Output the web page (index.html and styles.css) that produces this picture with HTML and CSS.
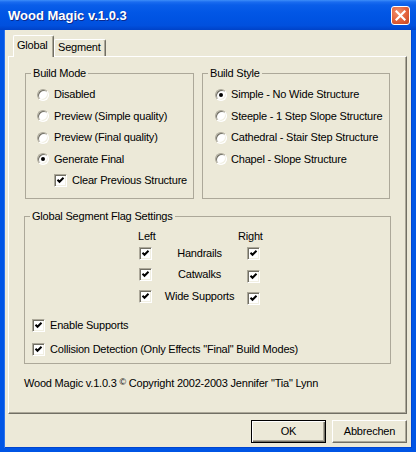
FILE: index.html
```html
<!DOCTYPE html>
<html>
<head>
<meta charset="utf-8">
<link rel="stylesheet" href="styles.css">
</head>
<body>
<div class="window">
  <div class="titlebar">
    <span class="title">Wood Magic v.1.0.3</span>
    <span class="close"><svg width="11" height="11" viewBox="0 0 11 11"><path d="M1.5 1.5 L9.5 9.5 M9.5 1.5 L1.5 9.5" stroke="#fff" stroke-width="2.2" stroke-linecap="square"/></svg></span>
  </div>
  <div class="frame">
    <div class="tabs">
      <div class="tab active">Global</div>
      <div class="tab seg">Segment</div>
    </div>
    <div class="panel">
      <div class="top-row">
        <fieldset class="group mode">
          <legend>Build Mode</legend>
          <div class="gbody mode-body">
            <div class="opt"><span class="radio"></span>Disabled</div>
            <div class="opt"><span class="radio"></span>Preview (Simple quality)</div>
            <div class="opt"><span class="radio"></span>Preview (Final quality)</div>
            <div class="opt"><span class="radio on"></span>Generate Final</div>
            <div class="opt sub"><span class="check"><svg width="11" height="11" viewBox="0 0 11 11"><path d="M2.5 4.8 L4.5 6.8 L8.5 2.8" fill="none" stroke="#000" stroke-width="2"/></svg></span>Clear Previous Structure</div>
          </div>
        </fieldset>
        <fieldset class="group style">
          <legend>Build Style</legend>
          <div class="gbody style-body">
            <div class="opt"><span class="radio on"></span>Simple - No Wide Structure</div>
            <div class="opt"><span class="radio"></span>Steeple - 1 Step Slope Structure</div>
            <div class="opt"><span class="radio"></span>Cathedral - Stair Step Structure</div>
            <div class="opt"><span class="radio"></span>Chapel - Slope Structure</div>
          </div>
        </fieldset>
      </div>
      <fieldset class="group flags">
        <legend>Global Segment Flag Settings</legend>
        <div class="gbody flags-body">
          <div class="flag-head"><span class="h-left">Left</span><span>Right</span></div>
          <div class="flag-row"><span class="check"><svg width="11" height="11" viewBox="0 0 11 11"><path d="M2.5 4.8 L4.5 6.8 L8.5 2.8" fill="none" stroke="#000" stroke-width="2"/></svg></span><span class="flag-label">Handrails</span><span class="check"><svg width="11" height="11" viewBox="0 0 11 11"><path d="M2.5 4.8 L4.5 6.8 L8.5 2.8" fill="none" stroke="#000" stroke-width="2"/></svg></span></div>
          <div class="flag-row"><span class="check"><svg width="11" height="11" viewBox="0 0 11 11"><path d="M2.5 4.8 L4.5 6.8 L8.5 2.8" fill="none" stroke="#000" stroke-width="2"/></svg></span><span class="flag-label">Catwalks</span><span class="check low"><svg width="11" height="11" viewBox="0 0 11 11"><path d="M2.5 4.8 L4.5 6.8 L8.5 2.8" fill="none" stroke="#000" stroke-width="2"/></svg></span></div>
          <div class="flag-row"><span class="check"><svg width="11" height="11" viewBox="0 0 11 11"><path d="M2.5 4.8 L4.5 6.8 L8.5 2.8" fill="none" stroke="#000" stroke-width="2"/></svg></span><span class="flag-label">Wide Supports</span><span class="check low"><svg width="11" height="11" viewBox="0 0 11 11"><path d="M2.5 4.8 L4.5 6.8 L8.5 2.8" fill="none" stroke="#000" stroke-width="2"/></svg></span></div>
          <div class="opt enable"><span class="check"><svg width="11" height="11" viewBox="0 0 11 11"><path d="M2.5 4.8 L4.5 6.8 L8.5 2.8" fill="none" stroke="#000" stroke-width="2"/></svg></span>Enable Supports</div>
          <div class="opt collide"><span class="check"><svg width="11" height="11" viewBox="0 0 11 11"><path d="M2.5 4.8 L4.5 6.8 L8.5 2.8" fill="none" stroke="#000" stroke-width="2"/></svg></span>Collision Detection (Only Effects "Final" Build Modes)</div>
        </div>
      </fieldset>
      <p class="copy">Wood Magic v.1.0.3 <span class="cr">©</span> Copyright 2002-2003 Jennifer "Tia" Lynn</p>
    </div>
    <div class="buttons">
      <button class="btn default">OK</button>
      <button class="btn">Abbrechen</button>
    </div>
  </div>
</div>
</body>
</html>
```
FILE: styles.css
```css
* { box-sizing: border-box; }
body {
  margin: 0;
  font-family: "Liberation Sans", Arial, sans-serif;
  font-size: 11px;
  line-height: 13px;
  letter-spacing: -0.2px;
  color: #000;
}
.window {
  width: 416px;
  height: 452px;
  display: flex;
  flex-direction: column;
  background: #ECE9D8;
}
.titlebar {
  height: 30px;
  flex: none;
  display: flex;
  align-items: center;
  justify-content: space-between;
  padding: 0 6px 0 8px;
  background: linear-gradient(#3d8ef9 0, #1a6cf0 2px, #0a5ee9 5px, #0257e6 12px, #0054e3 60%, #0150de 85%, #0042c8 100%);
}
.title {
  color: #fff;
  font-weight: bold;
  font-size: 13px;
  letter-spacing: 0;
  text-shadow: 1px 1px 0 #0b2a8e;
  padding-top: 1px;
}
.close {
  width: 19px;
  height: 19px;
  border: 1px solid #fff;
  border-radius: 3px;
  background: radial-gradient(circle at 35% 30%, #f0906c 0, #e2603a 55%, #c4441f 100%);
  display: flex;
  align-items: center;
  justify-content: center;
}
.close svg { display: block; }
.frame {
  flex: 1;
  display: flex;
  flex-direction: column;
  border: 4px solid #0055e5;
  border-top: 0;
  box-shadow: inset 1px 0 #2a72ee, inset -1px 0 #0045d0, inset 0 -1px #0045d0;
  padding: 5px 5px 0 4px;
}
.tabs {
  display: flex;
  align-items: flex-end;
  height: 21px;
  padding-left: 5px;
}
.tab {
  height: 17px;
  line-height: 15px;
  padding-left: 3px;
  border-top: 1px solid #fff;
  border-left: 1px solid #fff;
  border-right: 1px solid #716f64;
  box-shadow: inset -1px 0 #aca899;
  border-radius: 2px 2px 0 0;
  background: #ECE9D8;
}
.tab.active {
  width: 41px;
  height: 22px;
  line-height: 19px;
  margin-bottom: -1px;
  position: relative;
  z-index: 1;
}
.tab.seg {
  width: 52px;
  padding-left: 3px;
}
.panel {
  height: 358px;
  flex: none;
  border: 1px solid;
  border-color: #fff #716f64 #716f64 #fff;
  box-shadow: inset -1px -1px #aca899;
  padding: 10px 14px 0 16px;
}
.top-row {
  display: flex;
  gap: 8px;
}
.group {
  margin: 0;
  padding: 0;
  min-width: 0;
  border: 1px solid #aca899;
}
.group legend {
  padding: 0 2px;
  margin-left: 5px;
}
.mode { width: 169px; }
.style { width: 188px; }
.gbody { padding-top: 4px; padding-bottom: 6px; }
.mode-body { padding-left: 11px; }
.style-body { padding-left: 12px; }
.opt {
  display: flex;
  align-items: center;
  height: 21.5px;
  white-space: nowrap;
}
.radio {
  width: 12px;
  height: 12px;
  flex: none;
  border-radius: 50%;
  background: #fff;
  border: 1px solid;
  border-color: #aca899 #fff #fff #aca899;
  box-shadow: inset 1px 1px #716f64, inset -1px -1px #f1efe2;
  margin-right: 5px;
  display: flex;
  align-items: center;
  justify-content: center;
}
.style-body .radio { margin-right: 4px; }
.radio.on::after {
  content: "";
  width: 4px;
  height: 4px;
  border-radius: 50%;
  background: #000;
}
.check {
  width: 13px;
  height: 13px;
  flex: none;
  background: #fff;
  border: 1px solid;
  border-color: #aca899 #fff #fff #aca899;
  box-shadow: inset 1px 1px #716f64, inset -1px -1px #f1efe2;
  margin-right: 5px;
}
.check svg { display: block; }
.opt.sub { padding-left: 17px; }
.opt.sub .check { margin-right: 5px; }
.flags {
  width: 367px;
  margin: 11px 0 0 -1px;
}
.flags-body {
  padding: 6px 0 3px 7px;
}
.flag-head {
  display: flex;
  height: 14px;
  line-height: 14px;
  padding-left: 106px;
}
.h-left { width: 100px; }
.flag-row {
  display: flex;
  align-items: center;
  height: 21.5px;
  padding-left: 107px;
}
.flag-row .check { margin-right: 0; }
.flag-label {
  width: 95px;
  text-align: center;
}
.flag-row .check.low { margin-top: 4px; }
.opt.enable { margin-top: 8px; height: 21px; }
.opt.collide { margin-top: 3px; height: 21px; }
.copy {
  margin: 12px 0 0 -1px;
}
.cr { font-size: 9px; vertical-align: 2px; }
.buttons {
  display: flex;
  justify-content: flex-end;
  gap: 6px;
  margin-top: 6px;
}
.btn {
  width: 75px;
  height: 23px;
  padding: 0;
  font: inherit;
  letter-spacing: inherit;
  color: #000;
  background: #ECE9D8;
  border: 1px solid;
  border-color: #fff #716f64 #716f64 #fff;
  box-shadow: inset -1px -1px #aca899;
}
.btn.default {
  border: 1px solid #000;
  box-shadow: inset 1px 1px #fff, inset -1px -1px #716f64, inset -2px -2px #aca899;
}
```
